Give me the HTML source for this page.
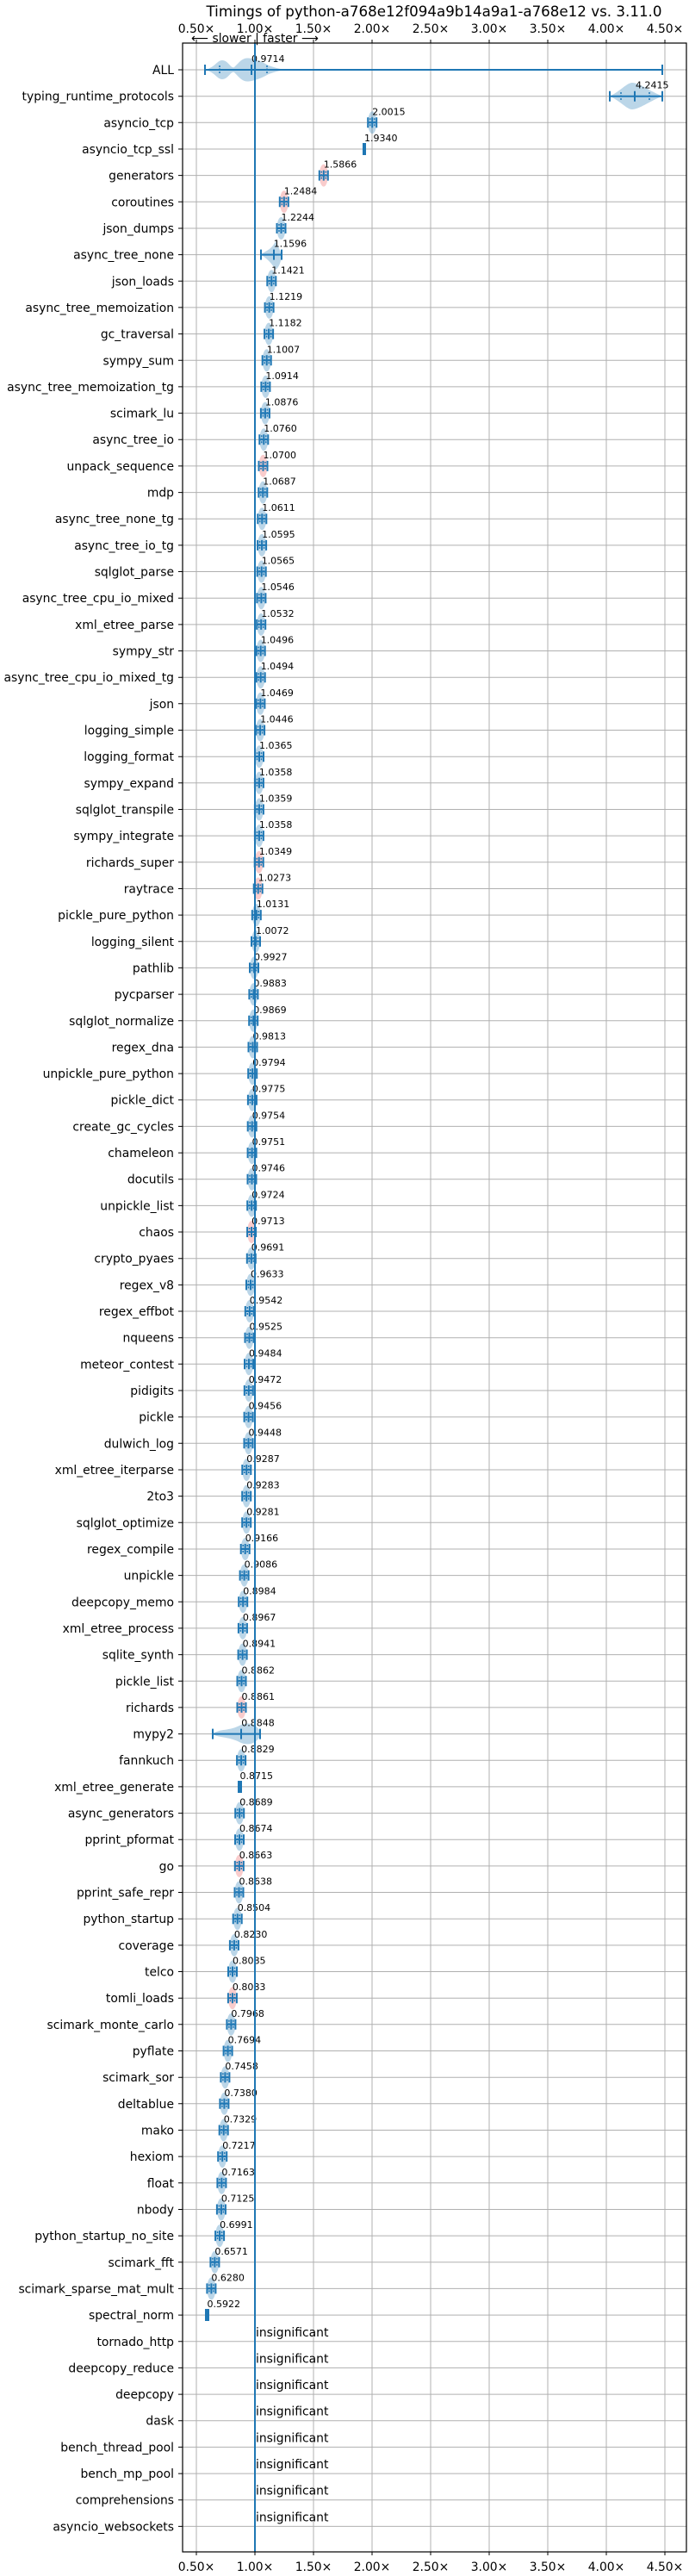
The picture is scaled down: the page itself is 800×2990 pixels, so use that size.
<!DOCTYPE html>
<html><head><meta charset="utf-8"><style>
html,body{margin:0;padding:0;background:#fff;}
svg{display:block;font-family:"DejaVu Sans","Liberation Sans",sans-serif;}
.l{font-size:13.9px;text-anchor:end;fill:#000;}
.v{font-size:11px;fill:#000;}
.t{font-size:13.9px;text-anchor:middle;fill:#000;}
.ins{font-size:13.9px;fill:#000;}
</style></head><body>
<svg width="800" height="2990" viewBox="0 0 800 2990" xmlns="http://www.w3.org/2000/svg">
<defs>
<g id="m">
<ellipse cx="0" cy="0" rx="5" ry="13" fill="#1f77b4" fill-opacity="0.3"/>
<path d="M-5 -6v12M5 -6v12M-5 0h10M0 -6v12" stroke="#1f77b4" stroke-width="2" fill="none"/>
<path d="M-2.5 -5v10M2.5 -5v10" stroke="#1f77b4" stroke-width="1.5" stroke-dasharray="2,1.5" fill="none"/>
</g>
<g id="r">
<ellipse cx="0" cy="0" rx="5" ry="13" fill="#f08080" fill-opacity="0.4"/>
<path d="M-5 -6v12M5 -6v12M-5 0h10M0 -6v12" stroke="#1f77b4" stroke-width="2" fill="none"/>
<path d="M-2.5 -5v10M2.5 -5v10" stroke="#1f77b4" stroke-width="1.5" stroke-dasharray="2,1.5" fill="none"/>
</g>
</defs>
<text x="504" y="19" class="t" style="font-size:16.7px">Timings of python-a768e12f094a9b14a9a1-a768e12 vs. 3.11.0</text>
<g class="t">
<text x="228" y="38">0.50×</text><text x="296" y="38">1.00×</text><text x="364" y="38">1.50×</text><text x="432" y="38">2.00×</text><text x="500" y="38">2.50×</text><text x="568" y="38">3.00×</text><text x="636" y="38">3.50×</text><text x="704" y="38">4.00×</text><text x="772" y="38">4.50×</text>
<text x="228" y="2984">0.50×</text><text x="296" y="2984">1.00×</text><text x="364" y="2984">1.50×</text><text x="432" y="2984">2.00×</text><text x="500" y="2984">2.50×</text><text x="568" y="2984">3.00×</text><text x="636" y="2984">3.50×</text><text x="704" y="2984">4.00×</text><text x="772" y="2984">4.50×</text>
</g>
<text x="296" y="49" class="t">⟵ slower | faster ⟶</text>
<!-- vertical grid -->
<path d="M228 50V2962M296 50V2962M364 50V2962M432 50V2962M500 50V2962M568 50V2962M636 50V2962M704 50V2962M772 50V2962" stroke="#b0b0b0" stroke-width="1"/>
<path d="M228 46v4M296 46v4M364 46v4M432 46v4M500 46v4M568 46v4M636 46v4M704 46v4M772 46v4M228 2962v4M296 2962v4M364 2962v4M432 2962v4M500 2962v4M568 2962v4M636 2962v4M704 2962v4M772 2962v4" stroke="#000" stroke-width="1"/>
<!-- horizontal grid + ticks -->
<g stroke="#b0b0b0" stroke-width="1">
<path d="M212 81H797M212 111.7H797M212 142.3H797M212 173H797M212 203.6H797M212 234.3H797M212 265H797M212 295.6H797M212 326.3H797M212 356.9H797M212 387.6H797M212 418.3H797M212 448.9H797M212 479.6H797M212 510.2H797M212 540.9H797M212 571.6H797M212 602.2H797M212 632.9H797M212 663.5H797M212 694.2H797M212 724.9H797M212 755.5H797M212 786.2H797M212 816.8H797M212 847.5H797M212 878.2H797M212 908.8H797M212 939.5H797M212 970.1H797M212 1000.8H797M212 1031.5H797M212 1062.1H797M212 1092.8H797M212 1123.4H797M212 1154.1H797M212 1184.8H797M212 1215.4H797M212 1246.1H797M212 1276.7H797M212 1307.4H797M212 1338.1H797M212 1368.7H797M212 1399.4H797M212 1430H797M212 1460.7H797M212 1491.4H797M212 1522H797M212 1552.7H797M212 1583.3H797M212 1614H797M212 1644.7H797M212 1675.3H797M212 1706H797M212 1736.6H797M212 1767.3H797M212 1798H797M212 1828.6H797M212 1859.3H797M212 1889.9H797M212 1920.6H797M212 1951.3H797M212 1981.9H797M212 2012.6H797M212 2043.2H797M212 2073.9H797M212 2104.6H797M212 2135.2H797M212 2165.9H797M212 2196.5H797M212 2227.2H797M212 2257.9H797M212 2288.5H797M212 2319.2H797M212 2349.8H797M212 2380.5H797M212 2411.2H797M212 2441.8H797M212 2472.5H797M212 2503.1H797M212 2533.8H797M212 2564.5H797M212 2595.1H797M212 2625.8H797M212 2656.4H797M212 2687.1H797M212 2717.8H797M212 2748.4H797M212 2779.1H797M212 2809.7H797M212 2840.4H797M212 2871.1H797M212 2901.7H797M212 2932.4H797"/>
</g>
<!-- labels -->
<g class="l">
<text x="202" y="86">ALL</text>
<text x="202" y="116.7">typing_runtime_protocols</text>
<text x="202" y="147.3">asyncio_tcp</text>
<text x="202" y="178">asyncio_tcp_ssl</text>
<text x="202" y="208.6">generators</text>
<text x="202" y="239.3">coroutines</text>
<text x="202" y="270">json_dumps</text>
<text x="202" y="300.6">async_tree_none</text>
<text x="202" y="331.3">json_loads</text>
<text x="202" y="361.9">async_tree_memoization</text>
<text x="202" y="392.6">gc_traversal</text>
<text x="202" y="423.3">sympy_sum</text>
<text x="202" y="453.9">async_tree_memoization_tg</text>
<text x="202" y="484.6">scimark_lu</text>
<text x="202" y="515.2">async_tree_io</text>
<text x="202" y="545.9">unpack_sequence</text>
<text x="202" y="576.6">mdp</text>
<text x="202" y="607.2">async_tree_none_tg</text>
<text x="202" y="637.9">async_tree_io_tg</text>
<text x="202" y="668.5">sqlglot_parse</text>
<text x="202" y="699.2">async_tree_cpu_io_mixed</text>
<text x="202" y="729.9">xml_etree_parse</text>
<text x="202" y="760.5">sympy_str</text>
<text x="202" y="791.2">async_tree_cpu_io_mixed_tg</text>
<text x="202" y="821.8">json</text>
<text x="202" y="852.5">logging_simple</text>
<text x="202" y="883.2">logging_format</text>
<text x="202" y="913.8">sympy_expand</text>
<text x="202" y="944.5">sqlglot_transpile</text>
<text x="202" y="975.1">sympy_integrate</text>
<text x="202" y="1005.8">richards_super</text>
<text x="202" y="1036.5">raytrace</text>
<text x="202" y="1067.1">pickle_pure_python</text>
<text x="202" y="1097.8">logging_silent</text>
<text x="202" y="1128.4">pathlib</text>
<text x="202" y="1159.1">pycparser</text>
<text x="202" y="1189.8">sqlglot_normalize</text>
<text x="202" y="1220.4">regex_dna</text>
<text x="202" y="1251.1">unpickle_pure_python</text>
<text x="202" y="1281.7">pickle_dict</text>
<text x="202" y="1312.4">create_gc_cycles</text>
<text x="202" y="1343.1">chameleon</text>
<text x="202" y="1373.7">docutils</text>
<text x="202" y="1404.4">unpickle_list</text>
<text x="202" y="1435">chaos</text>
<text x="202" y="1465.7">crypto_pyaes</text>
<text x="202" y="1496.4">regex_v8</text>
<text x="202" y="1527">regex_effbot</text>
<text x="202" y="1557.7">nqueens</text>
<text x="202" y="1588.3">meteor_contest</text>
<text x="202" y="1619">pidigits</text>
<text x="202" y="1649.7">pickle</text>
<text x="202" y="1680.3">dulwich_log</text>
<text x="202" y="1711">xml_etree_iterparse</text>
<text x="202" y="1741.6">2to3</text>
<text x="202" y="1772.3">sqlglot_optimize</text>
<text x="202" y="1803">regex_compile</text>
<text x="202" y="1833.6">unpickle</text>
<text x="202" y="1864.3">deepcopy_memo</text>
<text x="202" y="1894.9">xml_etree_process</text>
<text x="202" y="1925.6">sqlite_synth</text>
<text x="202" y="1956.3">pickle_list</text>
<text x="202" y="1986.9">richards</text>
<text x="202" y="2017.6">mypy2</text>
<text x="202" y="2048.2">fannkuch</text>
<text x="202" y="2078.9">xml_etree_generate</text>
<text x="202" y="2109.6">async_generators</text>
<text x="202" y="2140.2">pprint_pformat</text>
<text x="202" y="2170.9">go</text>
<text x="202" y="2201.5">pprint_safe_repr</text>
<text x="202" y="2232.2">python_startup</text>
<text x="202" y="2262.9">coverage</text>
<text x="202" y="2293.5">telco</text>
<text x="202" y="2324.2">tomli_loads</text>
<text x="202" y="2354.8">scimark_monte_carlo</text>
<text x="202" y="2385.5">pyflate</text>
<text x="202" y="2416.2">scimark_sor</text>
<text x="202" y="2446.8">deltablue</text>
<text x="202" y="2477.5">mako</text>
<text x="202" y="2508.1">hexiom</text>
<text x="202" y="2538.8">float</text>
<text x="202" y="2569.5">nbody</text>
<text x="202" y="2600.1">python_startup_no_site</text>
<text x="202" y="2630.8">scimark_fft</text>
<text x="202" y="2661.4">scimark_sparse_mat_mult</text>
<text x="202" y="2692.1">spectral_norm</text>
<text x="202" y="2722.8">tornado_http</text>
<text x="202" y="2753.4">deepcopy_reduce</text>
<text x="202" y="2784.1">deepcopy</text>
<text x="202" y="2814.7">dask</text>
<text x="202" y="2845.4">bench_thread_pool</text>
<text x="202" y="2876.1">bench_mp_pool</text>
<text x="202" y="2906.7">comprehensions</text>
<text x="202" y="2937.4">asyncio_websockets</text>
</g>
<!-- y ticks -->
<path stroke="#000" stroke-width="1" d="M207 81h5M207 111.7h5M207 142.3h5M207 173h5M207 203.6h5M207 234.3h5M207 265h5M207 295.6h5M207 326.3h5M207 356.9h5M207 387.6h5M207 418.3h5M207 448.9h5M207 479.6h5M207 510.2h5M207 540.9h5M207 571.6h5M207 602.2h5M207 632.9h5M207 663.5h5M207 694.2h5M207 724.9h5M207 755.5h5M207 786.2h5M207 816.8h5M207 847.5h5M207 878.2h5M207 908.8h5M207 939.5h5M207 970.1h5M207 1000.8h5M207 1031.5h5M207 1062.1h5M207 1092.8h5M207 1123.4h5M207 1154.1h5M207 1184.8h5M207 1215.4h5M207 1246.1h5M207 1276.7h5M207 1307.4h5M207 1338.1h5M207 1368.7h5M207 1399.4h5M207 1430h5M207 1460.7h5M207 1491.4h5M207 1522h5M207 1552.7h5M207 1583.3h5M207 1614h5M207 1644.7h5M207 1675.3h5M207 1706h5M207 1736.6h5M207 1767.3h5M207 1798h5M207 1828.6h5M207 1859.3h5M207 1889.9h5M207 1920.6h5M207 1951.3h5M207 1981.9h5M207 2012.6h5M207 2043.2h5M207 2073.9h5M207 2104.6h5M207 2135.2h5M207 2165.9h5M207 2196.5h5M207 2227.2h5M207 2257.9h5M207 2288.5h5M207 2319.2h5M207 2349.8h5M207 2380.5h5M207 2411.2h5M207 2441.8h5M207 2472.5h5M207 2503.1h5M207 2533.8h5M207 2564.5h5M207 2595.1h5M207 2625.8h5M207 2656.4h5M207 2687.1h5M207 2717.8h5M207 2748.4h5M207 2779.1h5M207 2809.7h5M207 2840.4h5M207 2871.1h5M207 2901.7h5M207 2932.4h5"/>
<!-- ALL special -->
<path d="M238 81 C250 78 252 70 258 70 C265 70 268 80 272 78 C280 70 282 66 292 68 C300 70 305 72 312 76 C320 79 325 80 332 81 C325 82 320 83 312 86 C305 90 300 92 292 94 C282 96 280 92 272 84 C268 82 265 92 258 92 C252 92 250 84 238 81Z" fill="#1f77b4" fill-opacity="0.3"/>
<path d="M238 81H769M238 75v12M292 75v12M769 75v12" stroke="#1f77b4" stroke-width="2" fill="none"/>
<path d="M255 76v10M310 76v10" stroke="#1f77b4" stroke-width="1.5" stroke-dasharray="2,1.5"/>
<!-- typing special -->
<path d="M708 111.7 C720 106 728 96 734 96 C742 96 755 106 769 111.7 C755 117 742 127 734 127 C728 127 720 117 708 111.7Z" fill="#1f77b4" fill-opacity="0.3"/>
<path d="M708 111.7H769M708 105.7v12M737 105.7v12M769 105.7v12" stroke="#1f77b4" stroke-width="2" fill="none"/>
<path d="M721 107v10M754 107v10" stroke="#1f77b4" stroke-width="1.5" stroke-dasharray="2,1.5"/>
<!-- async_tree_none wide -->
<path d="M303 295.6 C310 290 315 290 320 280 C325 290 327 295 327 295.6 C327 300 325 310 320 313 C315 305 310 300 303 295.6Z" fill="#1f77b4" fill-opacity="0.3"/>
<path d="M303 295.6H327M303 289.6v12M318 289.6v12M327 289.6v12" stroke="#1f77b4" stroke-width="2" fill="none"/>
<!-- mypy2 wide -->
<path d="M247 2012.6 C255 2006 265 2010 280 2002 C290 1998 300 2002 303 2012.6 C300 2022 290 2027 280 2023 C265 2015 255 2018 247 2012.6Z" fill="#1f77b4" fill-opacity="0.3"/>
<path d="M247 2012.6H302M247 2006.6v12M280 2006.6v12M302 2006.6v12" stroke="#1f77b4" stroke-width="2" fill="none"/>
<!-- markers -->
<use href="#m" x="432.2" y="142.3"/>
<rect x="421" y="166" width="4" height="14" fill="#1f77b4"/>
<use href="#r" x="375.8" y="203.6"/>
<use href="#r" x="329.8" y="234.3"/>
<use href="#m" x="326.5" y="265"/>
<use href="#m" x="315.3" y="326.3"/>
<use href="#m" x="312.6" y="356.9"/>
<use href="#m" x="312.1" y="387.6"/>
<use href="#m" x="309.7" y="418.3"/>
<use href="#m" x="308.4" y="448.9"/>
<use href="#m" x="307.9" y="479.6"/>
<use href="#m" x="306.3" y="510.2"/>
<use href="#r" x="305.5" y="540.9"/>
<use href="#m" x="305.3" y="571.6"/>
<use href="#m" x="304.3" y="602.2"/>
<use href="#m" x="304.1" y="632.9"/>
<use href="#m" x="303.7" y="663.5"/>
<use href="#m" x="303.4" y="694.2"/>
<use href="#m" x="303.2" y="724.9"/>
<use href="#m" x="302.7" y="755.5"/>
<use href="#m" x="302.7" y="786.2"/>
<use href="#m" x="302.4" y="816.8"/>
<use href="#m" x="302.1" y="847.5"/>
<use href="#m" x="301" y="878.2"/>
<use href="#m" x="300.9" y="908.8"/>
<use href="#m" x="300.9" y="939.5"/>
<use href="#m" x="300.9" y="970.1"/>
<use href="#r" x="300.7" y="1000.8"/>
<use href="#r" x="299.7" y="1031.5"/>
<use href="#m" x="297.8" y="1062.1"/>
<use href="#m" x="297" y="1092.8"/>
<use href="#m" x="295" y="1123.4"/>
<use href="#m" x="294.4" y="1154.1"/>
<use href="#m" x="294.2" y="1184.8"/>
<use href="#m" x="293.5" y="1215.4"/>
<use href="#m" x="293.2" y="1246.1"/>
<use href="#m" x="292.9" y="1276.7"/>
<use href="#m" x="292.7" y="1307.4"/>
<use href="#m" x="292.6" y="1338.1"/>
<use href="#m" x="292.5" y="1368.7"/>
<use href="#m" x="292.2" y="1399.4"/>
<use href="#r" x="292.1" y="1430"/>
<use href="#m" x="291.8" y="1460.7"/>
<use href="#m" x="291" y="1491.4"/>
<use href="#m" x="289.8" y="1522"/>
<use href="#m" x="289.5" y="1552.7"/>
<use href="#m" x="289" y="1583.3"/>
<use href="#m" x="288.8" y="1614"/>
<use href="#m" x="288.6" y="1644.7"/>
<use href="#m" x="288.5" y="1675.3"/>
<use href="#m" x="286.3" y="1706"/>
<use href="#m" x="286.2" y="1736.6"/>
<use href="#m" x="286.2" y="1767.3"/>
<use href="#m" x="284.7" y="1798"/>
<use href="#m" x="283.6" y="1828.6"/>
<use href="#m" x="282.2" y="1859.3"/>
<use href="#m" x="281.9" y="1889.9"/>
<use href="#m" x="281.6" y="1920.6"/>
<use href="#m" x="280.5" y="1951.3"/>
<use href="#r" x="280.5" y="1981.9"/>
<use href="#m" x="280.1" y="2043.2"/>
<rect x="276" y="2067" width="5" height="14" fill="#1f77b4"/>
<use href="#m" x="278.2" y="2104.6"/>
<use href="#m" x="278" y="2135.2"/>
<use href="#r" x="277.8" y="2165.9"/>
<use href="#m" x="277.5" y="2196.5"/>
<use href="#m" x="275.7" y="2227.2"/>
<use href="#m" x="271.9" y="2257.9"/>
<use href="#m" x="270" y="2288.5"/>
<use href="#r" x="269.9" y="2319.2"/>
<use href="#m" x="268.4" y="2349.8"/>
<use href="#m" x="264.6" y="2380.5"/>
<use href="#m" x="261.4" y="2411.2"/>
<use href="#m" x="260.4" y="2441.8"/>
<use href="#m" x="259.7" y="2472.5"/>
<use href="#m" x="258.2" y="2503.1"/>
<use href="#m" x="257.4" y="2533.8"/>
<use href="#m" x="256.9" y="2564.5"/>
<use href="#m" x="255.1" y="2595.1"/>
<use href="#m" x="249.4" y="2625.8"/>
<use href="#m" x="245.4" y="2656.4"/>
<rect x="238" y="2680" width="5" height="14" fill="#1f77b4"/>
<!-- value labels -->
<g class="v">
<text x="292" y="72">0.9714</text>
<text x="738" y="102.7">4.2415</text>
<text x="432.2" y="133.3">2.0015</text>
<text x="423" y="164">1.9340</text>
<text x="375.8" y="194.6">1.5866</text>
<text x="329.8" y="225.3">1.2484</text>
<text x="326.5" y="256">1.2244</text>
<text x="317.7" y="286.6">1.1596</text>
<text x="315.3" y="317.3">1.1421</text>
<text x="312.6" y="347.9">1.1219</text>
<text x="312.1" y="378.6">1.1182</text>
<text x="309.7" y="409.3">1.1007</text>
<text x="308.4" y="439.9">1.0914</text>
<text x="307.9" y="470.6">1.0876</text>
<text x="306.3" y="501.2">1.0760</text>
<text x="305.5" y="531.9">1.0700</text>
<text x="305.3" y="562.6">1.0687</text>
<text x="304.3" y="593.2">1.0611</text>
<text x="304.1" y="623.9">1.0595</text>
<text x="303.7" y="654.5">1.0565</text>
<text x="303.4" y="685.2">1.0546</text>
<text x="303.2" y="715.9">1.0532</text>
<text x="302.7" y="746.5">1.0496</text>
<text x="302.7" y="777.2">1.0494</text>
<text x="302.4" y="807.8">1.0469</text>
<text x="302.1" y="838.5">1.0446</text>
<text x="301" y="869.2">1.0365</text>
<text x="300.9" y="899.8">1.0358</text>
<text x="300.9" y="930.5">1.0359</text>
<text x="300.9" y="961.1">1.0358</text>
<text x="300.7" y="991.8">1.0349</text>
<text x="299.7" y="1022.5">1.0273</text>
<text x="297.8" y="1053.1">1.0131</text>
<text x="297" y="1083.8">1.0072</text>
<text x="295" y="1114.4">0.9927</text>
<text x="294.4" y="1145.1">0.9883</text>
<text x="294.2" y="1175.8">0.9869</text>
<text x="293.5" y="1206.4">0.9813</text>
<text x="293.2" y="1237.1">0.9794</text>
<text x="292.9" y="1267.7">0.9775</text>
<text x="292.7" y="1298.4">0.9754</text>
<text x="292.6" y="1329.1">0.9751</text>
<text x="292.5" y="1359.7">0.9746</text>
<text x="292.2" y="1390.4">0.9724</text>
<text x="292.1" y="1421">0.9713</text>
<text x="291.8" y="1451.7">0.9691</text>
<text x="291" y="1482.4">0.9633</text>
<text x="289.8" y="1513">0.9542</text>
<text x="289.5" y="1543.7">0.9525</text>
<text x="289" y="1574.3">0.9484</text>
<text x="288.8" y="1605">0.9472</text>
<text x="288.6" y="1635.7">0.9456</text>
<text x="288.5" y="1666.3">0.9448</text>
<text x="286.3" y="1697">0.9287</text>
<text x="286.2" y="1727.6">0.9283</text>
<text x="286.2" y="1758.3">0.9281</text>
<text x="284.7" y="1789">0.9166</text>
<text x="283.6" y="1819.6">0.9086</text>
<text x="282.2" y="1850.3">0.8984</text>
<text x="281.9" y="1880.9">0.8967</text>
<text x="281.6" y="1911.6">0.8941</text>
<text x="280.5" y="1942.3">0.8862</text>
<text x="280.5" y="1972.9">0.8861</text>
<text x="280.3" y="2003.6">0.8848</text>
<text x="280.1" y="2034.2">0.8829</text>
<text x="278.5" y="2064.9">0.8715</text>
<text x="278.2" y="2095.6">0.8689</text>
<text x="278" y="2126.2">0.8674</text>
<text x="277.8" y="2156.9">0.8663</text>
<text x="277.5" y="2187.5">0.8638</text>
<text x="275.7" y="2218.2">0.8504</text>
<text x="271.9" y="2248.9">0.8230</text>
<text x="270" y="2279.5">0.8085</text>
<text x="269.9" y="2310.2">0.8083</text>
<text x="268.4" y="2340.8">0.7968</text>
<text x="264.6" y="2371.5">0.7694</text>
<text x="261.4" y="2402.2">0.7458</text>
<text x="260.4" y="2432.8">0.7380</text>
<text x="259.7" y="2463.5">0.7329</text>
<text x="258.2" y="2494.1">0.7217</text>
<text x="257.4" y="2524.8">0.7163</text>
<text x="256.9" y="2555.5">0.7125</text>
<text x="255.1" y="2586.1">0.6991</text>
<text x="249.4" y="2616.8">0.6571</text>
<text x="245.4" y="2647.4">0.6280</text>
<text x="240.5" y="2678.1">0.5922</text>
</g>
<g class="ins">
<text x="297" y="2711.8">insignificant</text>
<text x="297" y="2742.4">insignificant</text>
<text x="297" y="2773.1">insignificant</text>
<text x="297" y="2803.7">insignificant</text>
<text x="297" y="2834.4">insignificant</text>
<text x="297" y="2865.1">insignificant</text>
<text x="297" y="2895.7">insignificant</text>
<text x="297" y="2926.4">insignificant</text>
</g>
<!-- 1.00 line -->
<path d="M296 50V2962" stroke="#1f77b4" stroke-width="2"/>
<!-- frame -->
<rect x="212" y="50" width="585" height="2912" fill="none" stroke="#000" stroke-width="1.2"/>
</svg>
</body></html>
